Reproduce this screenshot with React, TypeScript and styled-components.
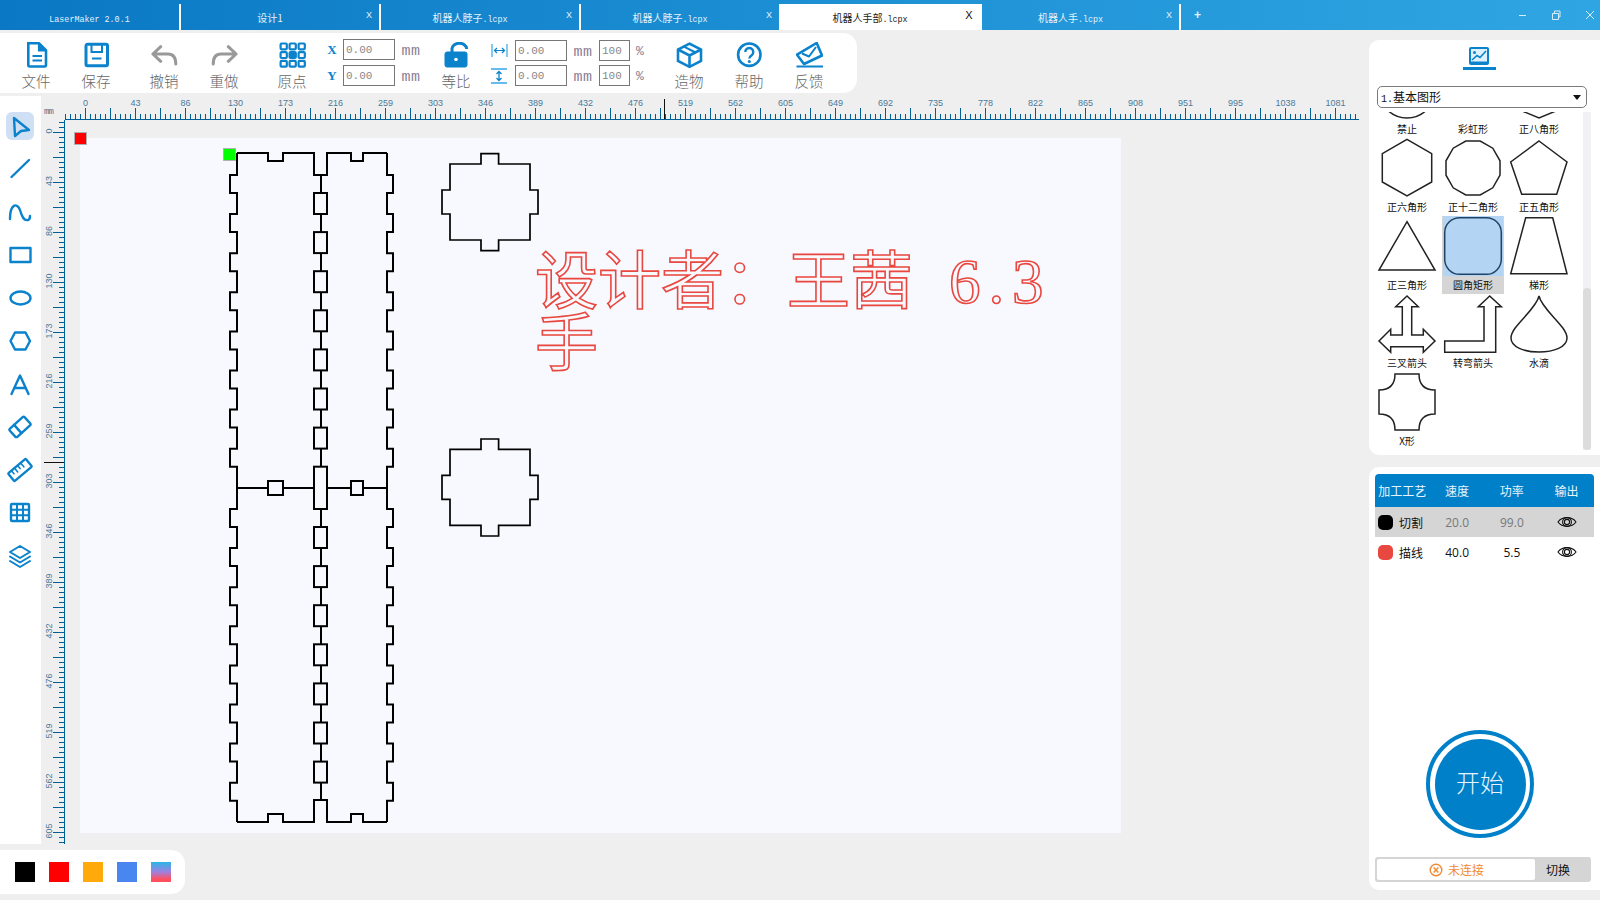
import { ReactNode } from 'react';
import styled, { createGlobalStyle } from 'styled-components';

const BLUE = '#0a82cc';
const HEAD = '#0080c8';
const PAPER = '#f8f9ff';
const RULER = '#005f92';
const CJK = '"Noto Sans CJK SC", "Noto Sans", sans-serif';
const MONO = '"Liberation Mono", "Noto Sans CJK SC", monospace';

const GlobalStyle = createGlobalStyle`
  html, body {
    margin: 0;
    padding: 0;
    background: #efefef;
    overflow: hidden;
  }
  * {
    box-sizing: border-box;
  }
`;

const Root = styled.div`
  width: 1600px;
  height: 900px;
  overflow: hidden;
  display: flex;
  flex-direction: column;
  background: #efefef;
  font-family: ${CJK};
`;

/* title bar */
const TabBar = styled.div`
  height: 30px;
  flex: none;
  display: flex;
  align-items: flex-end;
  background: linear-gradient(90deg, #0a78c4, #2fa6e3);
`;

const Tab = styled.div<{ $active?: boolean; $width: number }>`
  width: ${(p) => p.$width}px;
  height: 26px;
  padding-right: ${(p) => (p.$active ? 3 : 0)}px;
  display: flex;
  align-items: center;
  font-size: 10px;
  color: ${(p) => (p.$active ? '#222' : '#e4f2fb')};
  background: ${(p) => (p.$active ? '#fff' : 'transparent')};
  border-right: ${(p) => (p.$active ? 'none' : '2px solid #fff')};
`;

const TabName = styled.span`
  flex: 1;
  text-align: center;
`;

const Ext = styled.span`
  font-family: ${MONO};
  font-size: 8.4px;
`;

const TabClose = styled.span<{ $active?: boolean }>`
  width: 20px;
  margin-top: -4px;
  text-align: center;
  font-family: "Liberation Sans", sans-serif;
  font-size: ${(p) => (p.$active ? 11 : 9)}px;
  color: ${(p) => (p.$active ? '#111' : '#e4f2fb')};
`;

const AddTab = styled.span`
  margin-left: 13px;
  height: 26px;
  color: #e4f2fb;
  font-family: "Liberation Sans", sans-serif;
  font-weight: bold;
  font-size: 12px;
  line-height: 22px;
`;

const WindowButtons = styled.div`
  margin-left: auto;
  height: 30px;
  display: flex;
  align-items: center;
  gap: 14px;
  color: #d8eefa;
`;

const WindowButton = styled.div`
  width: 20px;
  display: flex;
  justify-content: center;
`;

const Body = styled.div`
  flex: 1;
  min-height: 0;
  display: flex;
`;

const LeftColumn = styled.div`
  width: 1369px;
  flex: none;
  padding-top: 3px;
  display: flex;
  flex-direction: column;
`;

/* top toolbar */
const Toolbar = styled.div`
  width: 857px;
  height: 60px;
  flex: none;
  display: flex;
  padding-left: 6px;
  background: #fff;
  border-radius: 0 14px 14px 0;
`;

const ToolItem = styled.div<{ $gap?: number }>`
  width: 60px;
  margin-left: ${(p) => p.$gap ?? 0}px;
  padding-top: 9px;
  display: flex;
  flex-direction: column;
  align-items: center;
  svg {
    display: block;
    width: 27px;
    height: 26px;
  }
`;

const ToolLabel = styled.span`
  margin-top: 4px;
  font-size: 14.5px;
  line-height: 18px;
  font-weight: 300;
  color: #666;
`;

const FieldGrid = styled.div<{ $columns: string; $left: number; $top: number; $rowGap: number }>`
  margin-left: ${(p) => p.$left}px;
  padding-top: ${(p) => p.$top}px;
  height: 60px;
  display: grid;
  grid-template-columns: ${(p) => p.$columns};
  grid-auto-rows: 21px;
  row-gap: ${(p) => p.$rowGap}px;
  align-items: center;
  justify-items: center;
`;

const AxisLetter = styled.span`
  font-family: "Liberation Serif", serif;
  font-weight: bold;
  font-size: 13px;
  color: ${BLUE};
`;

const NumberBox = styled.input`
  width: 100%;
  height: 21px;
  padding: 0 0 0 2px;
  border: 1px solid #777;
  border-radius: 0;
  outline: none;
  background: #fff;
  font-family: ${MONO};
  font-size: 11px;
  color: #888;
`;

const Unit = styled.span<{ $size: number }>`
  margin-top: ${(p) => (p.$size > 14 ? 3 : 1)}px;
  font-family: ${MONO};
  font-size: ${(p) => p.$size}px;
  letter-spacing: ${(p) => (p.$size > 14 ? '0.4px' : '0')};
  line-height: 21px;
  color: #8a8094;
`;

/* work area */
const WorkRow = styled.div`
  height: 751px;
  flex: none;
  display: flex;
`;

const Rail = styled.div`
  width: 41px;
  margin-top: 3px;
  padding: 16px 1px 0 0;
  display: flex;
  flex-direction: column;
  align-items: center;
  gap: 15px;
  background: #fff;
`;

const RailButton = styled.div<{ $active?: boolean }>`
  width: 28px;
  height: 28px;
  flex: none;
  display: flex;
  align-items: center;
  justify-content: center;
  border-radius: 6px;
  background: ${(p) => (p.$active ? '#cfe0f4' : 'transparent')};
  svg {
    display: block;
    width: 24px;
    height: 24px;
    overflow: visible;
  }
`;

const Workspace = styled.div`
  width: 1318px;
  display: grid;
  grid-template-columns: 24px 1fr;
  grid-template-rows: 27px 1fr;
`;

const Corner = styled.div`
  font-family: ${MONO};
  font-size: 9px;
  letter-spacing: -1px;
  color: #5a6f8c;
  padding: 14px 0 0 3px;
`;

const RulerSvg = styled.svg`
  display: block;
`;

const Stage = styled.div`
  position: relative;
  padding: 18px 0 0 15px;
`;

const Paper = styled.div`
  position: relative;
  width: 1041px;
  height: 695px;
  background: ${PAPER};
`;

const DrawingSvg = styled.svg`
  display: block;
`;

const Handle = styled.span<{ $x: number; $y: number; $color: string }>`
  position: absolute;
  left: ${(p) => p.$x}px;
  top: ${(p) => p.$y}px;
  width: 13px;
  height: 13px;
  background: ${(p) => p.$color};
  border: 1px solid #b0b0b0;
`;

const RedText = styled.div`
  position: absolute;
  left: 455px;
  top: 110px;
  font-family: ${CJK};
  font-size: 63px;
  line-height: 56px;
  white-space: nowrap;
  color: transparent;
  -webkit-text-fill-color: ${PAPER};
  -webkit-text-stroke: 1.6px #e8483f;
`;

const HalfGlyph = styled.span<{ $gap?: number }>`
  display: inline-block;
  width: 31.5px;
  margin-left: ${(p) => p.$gap ?? 0}px;
  text-align: center;
  font-family: "Liberation Serif", serif;
`;

const Swatches = styled.div`
  width: 185px;
  height: 44px;
  margin-top: 6px;
  padding-left: 15px;
  display: flex;
  align-items: center;
  gap: 14px;
  background: #fff;
  border-radius: 0 14px 14px 0;
`;

const Swatch = styled.span<{ $fill: string }>`
  width: 20px;
  height: 20px;
  background: ${(p) => p.$fill};
`;

/* right column */
const RightColumn = styled.div`
  flex: 1;
  padding-top: 10px;
  display: flex;
  flex-direction: column;
  gap: 12px;
`;

const Panel = styled.div<{ $height: number }>`
  height: ${(p) => p.$height}px;
  flex: none;
  background: #fff;
  border-radius: 10px 0 0 10px;
`;

const ShapeTabs = styled.div`
  height: 46px;
  display: flex;
  justify-content: center;
  padding-right: 11px;
`;

const ShapeTab = styled.div`
  width: 33px;
  height: 30px;
  padding-top: 7px;
  display: flex;
  justify-content: center;
  border-bottom: 3px solid ${BLUE};
`;

const ShapeSelect = styled.div`
  width: 210px;
  height: 22px;
  margin-left: 8px;
  padding: 0 5px 2px 3px;
  display: flex;
  align-items: center;
  justify-content: space-between;
  border: 1px solid #7a7a7a;
  border-radius: 5px;
  font-size: 12px;
  color: #111;
`;

const SelectNumber = styled.span`
  font-family: ${MONO};
  font-size: 10px;
`;

const SelectArrow = styled.span`
  width: 0;
  height: 0;
  margin-top: 2px;
  border-left: 4px solid transparent;
  border-right: 4px solid transparent;
  border-top: 5px solid #111;
`;

const ShapeArea = styled.div`
  height: 338px;
  margin-top: 4px;
  padding-left: 8px;
  display: flex;
`;

const ShapeViewport = styled.div`
  width: 206px;
  overflow: hidden;
`;

const ShapeGrid = styled.div`
  margin-top: -52px;
  display: grid;
  grid-template-columns: repeat(3, 60px);
  grid-auto-rows: 78px;
  column-gap: 6px;
`;

const ShapeCell = styled.div<{ $selected?: boolean }>`
  position: relative;
  display: flex;
  flex-direction: column;
  align-items: center;
  margin: 0 ${(p) => (p.$selected ? -1 : 0)}px;
  background: ${(p) => (p.$selected ? '#d5d5d5' : 'transparent')};
`;

const ShapeSvg = styled.svg<{ $selected?: boolean }>`
  display: block;
  width: 60px;
  height: 60px;
  flex: none;
  fill: ${(p) => (p.$selected ? '#b3d4f2' : 'none')};
  stroke: ${(p) => (p.$selected ? '#1f4468' : '#222')};
  stroke-width: 1.5;
  background: ${(p) => (p.$selected ? '#b3d4f2' : 'transparent')};
`;

const ShapeName = styled.span`
  font-size: 10px;
  line-height: 18px;
  color: #111;
`;

const ScrollTrack = styled.div`
  width: 8px;
  height: 338px;
  padding-top: 176px;
  background: #f1f1f4;
`;

const ScrollThumb = styled.div`
  height: 162px;
  border-radius: 4px;
  background: #dcdcdc;
`;

const LayerTable = styled.div`
  width: 219px;
  margin: 7px 0 0 6px;
`;

const LayerRow = styled.div<{ $head?: boolean; $dim?: boolean }>`
  height: ${(p) => (p.$head ? 33 : 30)}px;
  display: grid;
  grid-template-columns: repeat(4, 1fr);
  align-items: center;
  justify-items: center;
  font-size: 12px;
  color: ${(p) => (p.$head ? '#e6f4fc' : '#111')};
  background: ${(p) => (p.$head ? HEAD : p.$dim ? '#d5d5d5' : '#fff')};
  border-radius: ${(p) => (p.$head ? '4px 4px 0 0' : '0')};
`;

const LayerName = styled.div`
  width: 100%;
  padding-left: 3px;
  display: flex;
  align-items: center;
  gap: 6px;
`;

const LayerDot = styled.span<{ $fill: string }>`
  width: 15px;
  height: 15px;
  border-radius: 5px;
  background: ${(p) => p.$fill};
`;

const LayerValue = styled.span<{ $dim?: boolean }>`
  font-family: "Open Sans", sans-serif;
  font-size: 12px;
  color: ${(p) => (p.$dim ? '#777' : '#111')};
`;

const StartOuter = styled.div`
  width: 108px;
  height: 108px;
  margin: 163px 0 0 57px;
  padding: 4.5px;
  border: 4.5px solid ${HEAD};
  border-radius: 50%;
`;

const StartInner = styled.div`
  width: 100%;
  height: 100%;
  padding-bottom: 5px;
  display: flex;
  align-items: center;
  justify-content: center;
  border-radius: 50%;
  background: ${HEAD};
  color: #e8f5fd;
  font-size: 24px;
  font-weight: 300;
`;

const StatusBar = styled.div`
  width: 216px;
  height: 25px;
  margin: 19px 0 0 6px;
  padding: 2px;
  display: flex;
  background: #d5d5d5;
  border-radius: 3px;
`;

const StatusBox = styled.div`
  width: 158px;
  padding-left: 52px;
  display: flex;
  align-items: center;
  gap: 5px;
  background: #fff;
  border-radius: 2px;
  font-size: 12px;
  color: #f08a30;
`;

const StatusSwitch = styled.div`
  flex: 1;
  padding-right: 8px;
  text-align: center;
  font-size: 12px;
  line-height: 21px;
  color: #111;
`;

const topLabels = ['0', '43', '86', '130', '173', '216', '259', '303', '346', '389', '432', '476', '519', '562', '605', '649', '692', '735', '778', '822', '865', '908', '951', '995', '1038', '1081'];
const sideLabels = topLabels.slice(0, 15);

function TopRuler() {
  const ticks: ReactNode[] = [];
  for (let n = -4; n <= 254; n++) {
    const x = 20.5 + n * 5;
    const tall = n % 5 === 0;
    ticks.push(<line key={n} x1={x} x2={x} y1={tall ? 15 : 21} y2={26} stroke={RULER} />);
  }
  return (
    <RulerSvg width={1294} height={27}>
      {ticks}
      <line x1={0} x2={1294} y1={26.5} y2={26.5} stroke={RULER} />
      {topLabels.map((label, i) => (
        <text key={label} x={20.5 + i * 50} y={13} textAnchor="middle" fontFamily="Liberation Sans" fontSize={9} fill="#4a7a9c">
          {label}
        </text>
      ))}
      <line x1={599.5} x2={599.5} y1={6} y2={26} stroke="#111" />
    </RulerSvg>
  );
}

function SideRuler() {
  const ticks: ReactNode[] = [];
  for (let n = -2; n <= 142; n++) {
    const y = 12.5 + n * 5;
    const tall = n % 5 === 0;
    ticks.push(<line key={n} x1={tall ? 12 : 18} x2={24} y1={y} y2={y} stroke={RULER} />);
  }
  return (
    <RulerSvg width={24} height={724}>
      {ticks}
      <line x1={23.5} x2={23.5} y1={0} y2={724} stroke={RULER} />
      {sideLabels.map((label, i) => (
        <text key={label} x={10.5} y={11 + i * 50} transform={`rotate(-90 10.5 ${11 + i * 50})`} textAnchor="middle" fontFamily="Liberation Sans" fontSize={9} fill="#4a7a9c">
          {label}
        </text>
      ))}
      <line x1={3} x2={23} y1={342.5} y2={342.5} stroke="#111" />
    </RulerSvg>
  );
}

const PITCH = 39.1;

function serrated(base: number, tab: number, start: number) {
  let d = '';
  for (let k = 0; k < 8; k++) {
    const y = start + k * PITCH;
    d += ` V${y} H${tab} V${y + 18} H${base}`;
  }
  return d;
}

function Drawing() {
  const slots = [175, 509].flatMap((start) => [0, 1, 2, 3, 4, 5, 6].map((k) => start + 18 + k * PITCH));
  const plate = 'M450 164 H481 V153.7 H498.6 V164 H530 V190 H538 V214 H530 V240 H498.6 V250.7 H481 V240 H450 V214 H442 V190 H450 Z';
  return (
    <DrawingSvg width={1041} height={695} viewBox="80 138 1041 695" fill="none" stroke="#000" strokeWidth={2}>
      <path d="M237 153 H268 V161 H283 V153 H314 V175 H327 V153 H351 V161 H363 V153 H387" />
      <path d={`M237 153${serrated(237, 230, 175)} V509${serrated(237, 230, 509)} V822`} />
      <path d={`M387 153${serrated(387, 393, 175)} V509${serrated(387, 393, 509)} V822`} />
      <path d="M237 822 H268 V814 H283 V822 H314 V800 H327 V822 H351 V814 H363 V822 H387" />
      <path d="M237 488 H268 M283 488 H314 M327 488 H351 M363 488 H387" />
      <path d="M321 175 V467 M321 509 V800" />
      {slots.map((y) => (
        <rect key={y} x={314} y={y} width={13} height={21} fill={PAPER} />
      ))}
      <rect x={314} y={466.7} width={13} height={42.3} fill={PAPER} />
      <rect x={268} y={481} width={15} height={14} fill={PAPER} />
      <rect x={351} y={481} width={12} height={14} fill={PAPER} />
      <path d={plate} strokeWidth={1.7} />
      <path d={plate} strokeWidth={1.7} transform="translate(0 285.3)" />
    </DrawingSvg>
  );
}

function polygon(sides: number, offset: number) {
  const pts: string[] = [];
  for (let i = 0; i < sides; i++) {
    const a = ((offset + (i * 360) / sides) * Math.PI) / 180;
    pts.push(`${(30 + 28 * Math.cos(a)).toFixed(1)},${(30 + 28 * Math.sin(a)).toFixed(1)}`);
  }
  return pts.join(' ');
}

const shapes: { name: string; selected?: boolean; art: ReactNode }[] = [
  { name: '禁止', art: <circle cx={30} cy={30} r={28} /> },
  { name: '彩虹形', art: <path d="M2 48 A28 28 0 0 1 58 48 H46 A16 16 0 0 0 14 48 Z" /> },
  { name: '正八角形', art: <polygon points={polygon(8, -90)} /> },
  { name: '正六角形', art: <polygon points="30,1.3 54.7,15.7 54.7,44 30,58 5.3,44 5.3,15.7" /> },
  { name: '正十二角形', art: <polygon points={polygon(12, 15)} /> },
  { name: '正五角形', art: <polygon points="30,3 58,24 47.7,56.3 12.7,56.3 1.7,24" /> },
  { name: '正三角形', art: <polygon points="30,5.7 58,54 2,54" /> },
  { name: '圆角矩形', selected: true, art: <rect x={1.7} y={1.7} width={56.6} height={56.6} rx={15} /> },
  { name: '梯形', art: <polygon points="16.7,1.7 43.7,1.7 58,57.7 1.7,57.7" /> },
  {
    name: '三叉箭头',
    art: <polygon points="30,2 41.3,12.7 34.7,12.7 34.7,41 46.3,41 46.3,35.3 58,47 46.3,58.3 46.3,52.7 13.7,52.7 13.7,58.3 2,47 13.7,35.3 13.7,41 25.3,41 25.3,12.7 18.7,12.7" />,
  },
  { name: '转弯箭头', art: <polygon points="46.7,2 58.3,12.7 52.7,12.7 52.7,58.3 1.7,58.3 1.7,47 41,47 41,12.7 35.3,12.7" /> },
  { name: '水滴', art: <path d="M30 2 C33 16 58 32 58 44 C58 53 45 58 30 58 C15 58 2 53 2 44 C2 32 27 16 30 2 Z" /> },
  { name: 'X形', art: <path d="M18 2 H42 Q42 18 58 18 V42 Q42 42 42 58 H18 Q18 42 2 42 V18 Q18 18 18 2 Z" /> },
];

const iconProps = { viewBox: '0 0 27 26', fill: 'none', stroke: BLUE, strokeWidth: 2.6 };
const grayArrow = { fill: 'none', stroke: '#999', strokeWidth: 3, strokeLinecap: 'round' as const, strokeLinejoin: 'round' as const };

const railProps = { viewBox: '0 0 24 24', fill: 'none', stroke: BLUE, strokeWidth: 2.4, strokeLinejoin: 'round' as const, strokeLinecap: 'round' as const };

const railIcons: ReactNode[] = [
  <path d="M6 4 L21 16 L13 17 L7 22 Z" />,
  <path d="M3.5 20 L21 3" />,
  <path d="M2 19 C2 4 9 2 12 10 C14 17 16 21 20 20 C21.5 19.5 22 18 22 16" />,
  <rect x={2.5} y={5} width={20} height={14} />,
  <ellipse cx={12.5} cy={12} rx={10} ry={6.5} />,
  <polygon points="7,3.5 17.5,3.5 22,12 17.5,20.5 7,20.5 2.5,12" />,
  <path d="M3.5 22 L12 3.5 L20.5 22 M6.5 16 H17.5" />,
  <g transform="rotate(-42 12 12)">
    <rect x={2} y={6.5} width={20} height={11} rx={1.5} />
    <path d="M9 6.5 V17.5" />
  </g>,
  <g transform="rotate(-40 12 12)">
    <rect x={0.5} y={7} width={23} height={10} rx={1} />
    <path d="M5 7 V11 M9 7 V12 M13 7 V11 M17 7 V12" strokeWidth={1.6} />
  </g>,
  <g>
    <rect x={3} y={3} width={18} height={17} rx={1} strokeWidth={2.4} />
    <path d="M9 3 V20 M15 3 V20 M3 8.7 H21 M3 14.3 H21" strokeWidth={2} strokeLinecap="butt" />
  </g>,
  <path d="M12 2 L22 8 L12 14 L2 8 Z M2 12.5 L12 18.5 L22 12.5 M2 17 L12 23 L22 17" strokeWidth={2} />,
];

const swatches = ['#000', '#f00', '#ffaa0a', '#4a86f0', 'linear-gradient(180deg, #2ab5e8, #a080e0 50%, #ff5060 85%)'];

function Eye() {
  return (
    <svg width={20} height={14} viewBox="0 0 20 14" fill="none" stroke="#111" strokeWidth={1.1}>
      <path d="M1 7 C5 1.2 15 1.2 19 7 C15 12.8 5 12.8 1 7 Z" />
      <circle cx={10} cy={7} r={4.4} />
      <circle cx={10} cy={7} r={2.6} />
    </svg>
  );
}

function App() {
  return (
    <Root>
      <GlobalStyle />
      <TabBar>
        <Tab $width={181}>
          <TabName>
            <Ext>LaserMaker 2.0.1</Ext>
          </TabName>
        </Tab>
        <Tab $width={200}>
          <TabName>设计1</TabName>
          <TabClose>X</TabClose>
        </Tab>
        <Tab $width={200}>
          <TabName>
            机器人脖子<Ext>.lcpx</Ext>
          </TabName>
          <TabClose>X</TabClose>
        </Tab>
        <Tab $width={200}>
          <TabName>
            机器人脖子<Ext>.lcpx</Ext>
          </TabName>
          <TabClose>X</TabClose>
        </Tab>
        <Tab $width={201} $active>
          <TabName>
            机器人手部<Ext>.lcpx</Ext>
          </TabName>
          <TabClose $active>X</TabClose>
        </Tab>
        <Tab $width={199}>
          <TabName>
            机器人手<Ext>.lcpx</Ext>
          </TabName>
          <TabClose>X</TabClose>
        </Tab>
        <AddTab>+</AddTab>
        <WindowButtons>
          <WindowButton>
            <svg width={9} height={9} stroke="currentColor">
              <path d="M1 4.5 H8" />
            </svg>
          </WindowButton>
          <WindowButton>
            <svg width={10} height={10} fill="none" stroke="currentColor">
              <path d="M1.5 3.5 H7.5 V9.5 H1.5 Z M3.5 3 V1 H9 V7 H8" />
            </svg>
          </WindowButton>
          <WindowButton>
            <svg width={10} height={10} stroke="currentColor">
              <path d="M1 1 L9 9 M9 1 L1 9" />
            </svg>
          </WindowButton>
        </WindowButtons>
      </TabBar>

      <Body>
        <LeftColumn>
          <Toolbar>
            <ToolItem>
              <svg {...iconProps}>
                <path d="M5.3 1.3 H16 L23 8.3 V23 a1.5 1.5 0 0 1 -1.5 1.5 H6.8 a1.5 1.5 0 0 1 -1.5 -1.5 Z" />
                <path d="M15.5 1.5 V9 H23" fill={BLUE} strokeWidth={1.2} />
                <path d="M9.5 14 H19 M9.5 18.5 H19" strokeWidth={2} />
              </svg>
              <ToolLabel>文件</ToolLabel>
            </ToolItem>
            <ToolItem>
              <svg {...iconProps}>
                <rect x={3} y={2.3} width={21.5} height={21.5} rx={1.5} strokeWidth={3} />
                <path d="M8.5 2.5 V10 H19 V2.5" strokeWidth={2} />
                <path d="M9 16.5 H18.5" strokeWidth={2} />
              </svg>
              <ToolLabel>保存</ToolLabel>
            </ToolItem>
            <ToolItem $gap={8}>
              <svg viewBox="0 0 27 26" {...grayArrow}>
                <path d="M9.7 4.7 L1.9 12 L9.7 19.3 M2 12 H17 Q24.8 12 24.8 22" />
              </svg>
              <ToolLabel>撤销</ToolLabel>
            </ToolItem>
            <ToolItem>
              <svg viewBox="0 0 27 26" {...grayArrow}>
                <g transform="matrix(-1 0 0 1 27 0)">
                  <path d="M9.7 4.7 L1.9 12 L9.7 19.3 M2 12 H17 Q24.8 12 24.8 22" />
                </g>
              </svg>
              <ToolLabel>重做</ToolLabel>
            </ToolItem>
            <ToolItem $gap={8}>
              <svg viewBox="0 0 27 26" fill="none" stroke={BLUE} strokeWidth={2.2}>
                {[0, 1, 2].flatMap((r) =>
                  [0, 1, 2].map((c) => (
                    <rect key={`${r}-${c}`} x={1.6 + c * 9} y={1.5 + r * 8.7} width={6.2} height={5.8} rx={1} fill={r === 1 && c === 1 ? BLUE : 'none'} />
                  )),
                )}
              </svg>
              <ToolLabel>原点</ToolLabel>
            </ToolItem>

            <FieldGrid $left={4} $top={6} $rowGap={5} $columns="12px 5px 52px 6px 20px">
              <AxisLetter>X</AxisLetter>
              <span />
              <NumberBox readOnly value="0.00" />
              <span />
              <Unit $size={15}>mm</Unit>
              <AxisLetter>Y</AxisLetter>
              <span />
              <NumberBox readOnly value="0.00" />
              <span />
              <Unit $size={15}>mm</Unit>
            </FieldGrid>

            <ToolItem $gap={5}>
              <svg {...iconProps}>
                <rect x={2} y={10} width={22} height={15} rx={2} fill={BLUE} strokeWidth={1} />
                <circle cx={13} cy={17.5} r={1.8} fill="#fff" stroke="none" />
                <path d="M9 10 V7 A7.2 5.4 0 0 1 23.6 6.5 V7" strokeWidth={3} />
              </svg>
              <ToolLabel>等比</ToolLabel>
            </ToolItem>

            <FieldGrid $left={4} $top={7} $rowGap={4} $columns="18px 7px 52px 6px 20px 6px 31px 6px 8px">
              <svg width={17} height={13} viewBox="0 0 17 13" fill="none" strokeWidth={1.2}>
                <path d="M1 0 V13 M16 0 V13" stroke="#35a5e6" />
                <path d="M3.5 6.5 H13.5 M6 4 L3.5 6.5 L6 9 M11 4 L13.5 6.5 L11 9" stroke={BLUE} />
              </svg>
              <span />
              <NumberBox readOnly value="0.00" />
              <span />
              <Unit $size={15}>mm</Unit>
              <span />
              <NumberBox readOnly value="100" />
              <span />
              <Unit $size={13}>%</Unit>
              <svg width={16} height={16} viewBox="0 0 16 16" fill="none" strokeWidth={1.3}>
                <path d="M0 1 H16 M0 15 H16" stroke="#35a5e6" />
                <path d="M8 3.5 V12.5 M5.5 6 L8 3.5 L10.5 6 M5.5 10 L8 12.5 L10.5 10" stroke={BLUE} />
              </svg>
              <span />
              <NumberBox readOnly value="0.00" />
              <span />
              <Unit $size={15}>mm</Unit>
              <span />
              <NumberBox readOnly value="100" />
              <span />
              <Unit $size={13}>%</Unit>
            </FieldGrid>

            <ToolItem $gap={15}>
              <svg {...iconProps}>
                <path d="M13.5 1.7 L25 7.5 V19 L13.5 24.8 L2 19 V7.5 Z" />
                <path d="M2 7.5 L13.5 13.5 L25 7.5 M13.5 13.5 V24.8" />
                <path d="M8 4.7 L19.5 10.5" strokeWidth={2} />
              </svg>
              <ToolLabel>造物</ToolLabel>
            </ToolItem>
            <ToolItem>
              <svg {...iconProps}>
                <circle cx={13.3} cy={12.7} r={11.2} />
                <path d="M9.3 10 a4 4 0 1 1 6.4 3.2 c-1.5 1 -2.4 1.6 -2.4 3.3" strokeWidth={2.4} />
                <circle cx={13.3} cy={19.5} r={1.5} fill={BLUE} stroke="none" />
              </svg>
              <ToolLabel>帮助</ToolLabel>
            </ToolItem>
            <ToolItem>
              <svg {...iconProps} strokeLinejoin="round">
                <polygon points="1,12.7 20.7,1 26,13.5 8,22" />
                <path d="M6 11.5 L13 14.5 L20 5" strokeWidth={2} />
                <path d="M0.5 24.5 H27" strokeWidth={2} />
              </svg>
              <ToolLabel>反馈</ToolLabel>
            </ToolItem>
          </Toolbar>

          <WorkRow>
            <Rail>
              {railIcons.map((icon, i) => (
                <RailButton key={i} $active={i === 0}>
                  <svg {...railProps}>{icon}</svg>
                </RailButton>
              ))}
            </Rail>
            <Workspace>
              <Corner>mm</Corner>
              <TopRuler />
              <SideRuler />
              <Stage>
                <Paper>
                  <Drawing />
                  <RedText>
                    设计者：王茜
                    <HalfGlyph $gap={36}>6</HalfGlyph>
                    <HalfGlyph>.</HalfGlyph>
                    <HalfGlyph>3</HalfGlyph>
                    <br />手
                  </RedText>
                </Paper>
                <Handle $x={9} $y={12} $color="#f00" />
                <Handle $x={158} $y={28} $color="#0f0" />
              </Stage>
            </Workspace>
          </WorkRow>

          <Swatches>
            {swatches.map((fill) => (
              <Swatch key={fill} $fill={fill} />
            ))}
          </Swatches>
        </LeftColumn>

        <RightColumn>
          <Panel $height={415}>
            <ShapeTabs>
              <ShapeTab>
                <svg width={20} height={18} viewBox="0 0 20 18">
                  <rect width={20} height={18} rx={2} fill={BLUE} />
                  <rect x={2} y={2} width={16} height={12.5} fill="#dff1fc" />
                  <path d="M3 13 L8 8.5 L11 10.5 L17 4" fill="none" stroke={BLUE} strokeWidth={1.6} />
                  <circle cx={5.5} cy={5.5} r={1.5} fill={BLUE} />
                </svg>
              </ShapeTab>
            </ShapeTabs>
            <ShapeSelect>
              <span>
                <SelectNumber>1.</SelectNumber>基本图形
              </span>
              <SelectArrow />
            </ShapeSelect>
            <ShapeArea>
              <ShapeViewport>
                <ShapeGrid>
                  {shapes.map((shape) => (
                    <ShapeCell key={shape.name} $selected={shape.selected}>
                      <ShapeSvg viewBox="0 0 60 60" $selected={shape.selected}>
                        {shape.art}
                      </ShapeSvg>
                      <ShapeName>{shape.name}</ShapeName>
                    </ShapeCell>
                  ))}
                </ShapeGrid>
              </ShapeViewport>
              <ScrollTrack>
                <ScrollThumb />
              </ScrollTrack>
            </ShapeArea>
          </Panel>

          <Panel $height={423}>
            <LayerTable>
              <LayerRow $head>
                <span>加工工艺</span>
                <span>速度</span>
                <span>功率</span>
                <span>输出</span>
              </LayerRow>
              <LayerRow $dim>
                <LayerName>
                  <LayerDot $fill="#000" />
                  切割
                </LayerName>
                <LayerValue $dim>20.0</LayerValue>
                <LayerValue $dim>99.0</LayerValue>
                <Eye />
              </LayerRow>
              <LayerRow>
                <LayerName>
                  <LayerDot $fill="#e8483f" />
                  描线
                </LayerName>
                <LayerValue>40.0</LayerValue>
                <LayerValue>5.5</LayerValue>
                <Eye />
              </LayerRow>
            </LayerTable>
            <StartOuter>
              <StartInner>开始</StartInner>
            </StartOuter>
            <StatusBar>
              <StatusBox>
                <svg width={14} height={14} viewBox="0 0 14 14" fill="none" stroke="#f08a30" strokeWidth={1.4}>
                  <circle cx={7} cy={7} r={5.8} />
                  <path d="M4.6 4.6 L9.4 9.4 M9.4 4.6 L4.6 9.4" />
                </svg>
                未连接
              </StatusBox>
              <StatusSwitch>切换</StatusSwitch>
            </StatusBar>
          </Panel>
        </RightColumn>
      </Body>
    </Root>
  );
}

export default App;
